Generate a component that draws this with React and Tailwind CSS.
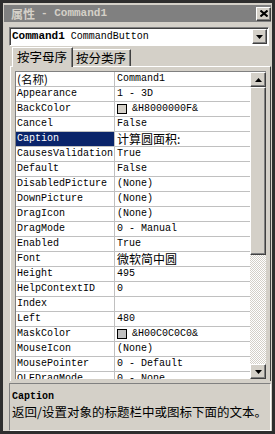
import React from "react";

const mono = "font-['Liberation_Mono','Noto_Sans_CJK_SC',monospace]";
const cjk = "font-['Noto_Sans_CJK_SC',sans-serif]";

// property rows of the grid
const rows = [
  { name: "(名称)", value: "Command1", wideName: true },
  { name: "Appearance", value: "1 - 3D" },
  { name: "BackColor", value: "&H8000000F&", swatch: "bg-[#d4d0c8]" },
  { name: "Cancel", value: "False" },
  { name: "Caption", value: "计算圆面积:", selected: true, wide: true },
  { name: "CausesValidation", value: "True" },
  { name: "Default", value: "False" },
  { name: "DisabledPicture", value: "(None)" },
  { name: "DownPicture", value: "(None)" },
  { name: "DragIcon", value: "(None)" },
  { name: "DragMode", value: "0 - Manual" },
  { name: "Enabled", value: "True" },
  { name: "Font", value: "微软简中圆", wide: true },
  { name: "Height", value: "495" },
  { name: "HelpContextID", value: "0" },
  { name: "Index", value: "" },
  { name: "Left", value: "480" },
  { name: "MaskColor", value: "&H00C0C0C0&", swatch: "bg-[#c0c0c0]" },
  { name: "MouseIcon", value: "(None)" },
  { name: "MousePointer", value: "0 - Default" },
  { name: "OLEDragMode", value: "0 - None" },
];

const raised =
  "bg-[#d4d0c8] border border-t-white border-l-white border-b-[#404040] border-r-[#404040] shadow-[inset_-1px_-1px_#808080]";

const Arrow = ({ up }) => (
  <svg width="7" height="4" viewBox="0 0 7 4">
    <polygon points={up ? "3.5,0 7,4 0,4" : "0,0 7,0 3.5,4"} fill="#000" />
  </svg>
);

const Row = ({ row }) => (
  <div className="flex h-[15px] shrink-0 border-b border-[#c0c0c0] bg-white">
    <div
      className={`flex w-[99px] shrink-0 items-center border-r border-[#c0c0c0] pl-[1px] ${
        row.selected ? "bg-[#0a246a] text-white" : "text-black"
      }`}
    >
      <span className={row.wideName ? `${cjk} text-[11.5px] leading-[14px]` : "leading-[14px]"}>{row.name}</span>
    </div>
    <div className="flex flex-1 items-center pl-[2px] text-black whitespace-nowrap">
      {row.swatch && (
        <span className={`mr-[5px] inline-block h-[10px] w-[10px] border border-black ${row.swatch}`} />
      )}
      <span className={row.wide ? `${cjk} text-[12px] leading-[14px]` : "leading-[14px]"}>{row.value}</span>
    </div>
  </div>
);

export default function App() {
  return (
    <div className={`flex h-[434px] w-[275px] flex-col overflow-hidden border-[3px] border-[#2e2e2e] bg-[#d4d0c8] ${mono}`}>
      {/* title bar */}
      <div className="mx-[1px] mt-[2px] flex h-[17px] shrink-0 items-center justify-between bg-[#808080] pl-[7px]">
        <div className="flex items-center text-[11px] font-bold text-[#d4d0c8]">
          <span className={`${cjk} text-[12px]`}>属性</span>
          <span className="ml-[6px]">- Command1</span>
        </div>
        <div className={`flex h-[14px] w-[15px] items-center justify-center ${raised}`}>
          <svg width="8" height="7" viewBox="0 0 8 7">
            <path d="M0.5 0.5 L7.5 6.5 M7.5 0.5 L0.5 6.5" stroke="#000" strokeWidth="2" />
          </svg>
        </div>
      </div>

      {/* object dropdown */}
      <div className="ml-[6px] mr-[3px] mt-[5px] flex h-[19px] shrink-0 items-center border border-t-[#808080] border-l-[#808080] border-b-white border-r-white bg-white shadow-[inset_1px_1px_#404040]">
        <div className="flex flex-1 items-center pl-[2px] text-black">
          <span className="text-[11px] font-bold">Command1</span>
          <span className="ml-[6px] text-[10px]">CommandButton</span>
        </div>
        <div className={`mr-[1px] flex h-[15px] w-[15px] items-center justify-center ${raised}`}>
          <Arrow />
        </div>
      </div>

      {/* tabs */}
      <div className={`ml-[9px] mt-[1px] flex h-[19px] shrink-0 items-end ${cjk} text-[12.5px] text-black`}>
        <div className="relative z-10 -mb-[1px] flex h-[20px] w-[61px] items-center border-t border-l border-r border-t-white border-l-white border-r-[#404040] bg-[#d4d0c8] pl-[4px] shadow-[inset_-1px_0_#808080]">
          按字母序
        </div>
        <div className="flex h-[17px] w-[58px] items-center border-t border-r border-t-white border-r-[#404040] pl-[3px] shadow-[inset_-1px_0_#808080]">
          按分类序
        </div>
      </div>

      {/* tab page */}
      <div className="ml-[7px] mr-[1px] h-[315px] shrink-0 border-t border-l border-r border-t-white border-l-white border-r-[#404040] pl-[4px] pr-[4px] pt-[4px]">
        <div className="flex h-[308px] overflow-hidden border-t border-l border-[#808080] text-[10px]">
          <div className="flex flex-1 flex-col overflow-hidden">
            {rows.map((row) => (
              <Row key={row.name} row={row} />
            ))}
          </div>
          {/* scrollbar */}
          <div className="flex w-[16px] shrink-0 flex-col">
            <div className={`flex h-[15px] shrink-0 items-center justify-center ${raised}`}>
              <Arrow up />
            </div>
            <div className={`h-[168px] shrink-0 ${raised}`} />
            <div className="flex-1 bg-[repeating-conic-gradient(#d4d0c8_0_25%,#ffffff_0_50%)] bg-[length:2px_2px]" />
            <div className={`flex h-[15px] shrink-0 items-center justify-center ${raised}`}>
              <Arrow />
            </div>
          </div>
        </div>
      </div>

      {/* description */}
      <div className="ml-[6px] mr-[1px] mt-[2px] flex h-[48px] shrink-0 flex-col border border-t-[#808080] border-l-[#808080] border-b-white border-r-white pl-[2px] pt-[6px] text-black">
        <div className="text-[10px] font-bold leading-[13px]">Caption</div>
        <div className={`${cjk} text-[12.5px] leading-[17px] whitespace-nowrap`}>
          返回/设置对象的标题栏中或图标下面的文本。
        </div>
      </div>
    </div>
  );
}
